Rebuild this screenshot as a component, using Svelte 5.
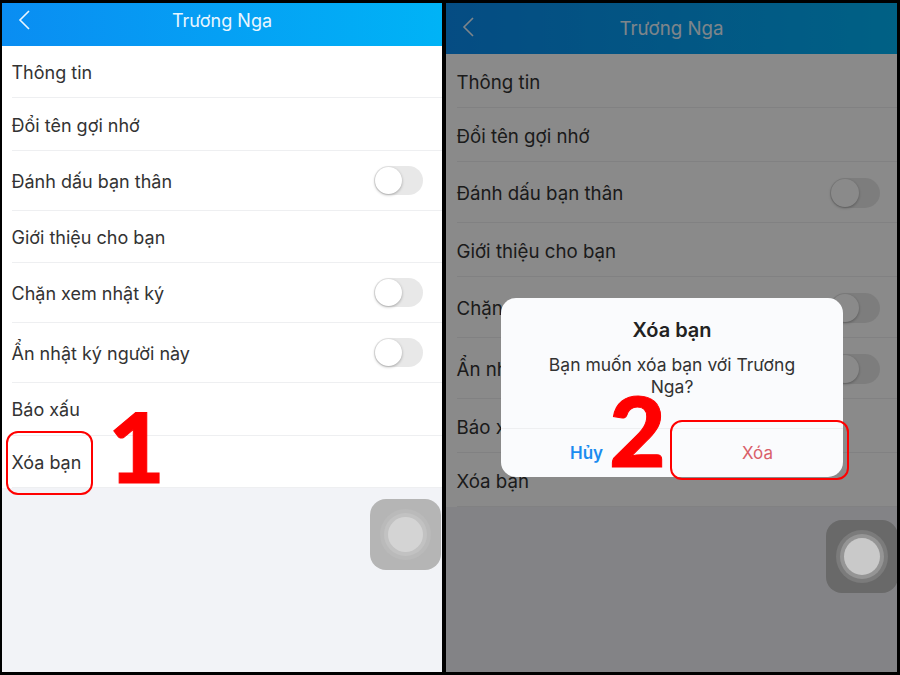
<script>
	const rows = [
		{ label: 'Thông tin' },
		{ label: 'Đổi tên gợi nhớ' },
		{ label: 'Đánh dấu bạn thân', toggle: true },
		{ label: 'Giới thiệu cho bạn' },
		{ label: 'Chặn xem nhật ký', toggle: true },
		{ label: 'Ẩn nhật ký người này', toggle: true },
		{ label: 'Báo xấu' },
		{ label: 'Xóa bạn' }
	];
</script>

{#snippet screen()}
	<header class="bar">
		<svg class="back" viewBox="0 0 14 22" fill="none" stroke="currentColor" stroke-width="1.6">
			<path d="M12 2 3 11l9 9" />
		</svg>
		<span>Trương Nga</span>
	</header>
	<ul class="list">
		{#each rows as row}
			<li class:tall={row.toggle}>
				<span>{row.label}</span>
				{#if row.toggle}
					<i class="toggle"></i>
				{/if}
			</li>
		{/each}
	</ul>
{/snippet}

{#snippet touch()}
	<div class="touch">
		<i class="ring outer"></i>
		<i class="ring mid"></i>
		<i class="ring core"></i>
	</div>
{/snippet}

<main class="page">
	<section class="phone first">
		{@render screen()}
		{@render touch()}
		<b class="mark mark-row"></b>
		<b class="digit one">1</b>
	</section>

	<section class="phone second">
		{@render screen()}
		<div class="dim"></div>
		{@render touch()}
		<div class="dialog">
			<h2>Xóa bạn</h2>
			<p>Bạn muốn xóa bạn với Trương Nga?</p>
			<div class="actions">
				<span class="cancel">Hủy</span>
				<span class="delete">Xóa</span>
			</div>
		</div>
		<b class="mark mark-btn"></b>
		<b class="digit two">2</b>
	</section>
</main>

<style>
	:global(body) {
		background: #000;
	}

	.page {
		width: 900px;
		height: 675px;
		box-sizing: border-box;
		padding: 3px 2px 3px 2px;
		display: flex;
		gap: 4px;
		background: #000;
		font-family: Inter, 'Liberation Sans', sans-serif;
		overflow: hidden;
	}

	.phone {
		position: relative;
		background: #f2f3f7;
		overflow: hidden;
		display: flex;
		flex-direction: column;
	}

	.first {
		width: 440px;
		--bar: 43px;
		--row: 52.4px;
		--tall: 60px;
		--fs: 18px;
		--pad: 9.5px;
		--row-top: 2px;
		--toggle-w: 49px;
		--toggle-h: 29px;
		--toggle-gap: 19px;
		--title-lift: 8px;
		--back-top: -16px;
	}

	.second {
		width: 451px;
		--bar: 51px;
		--row: 54px;
		--tall: 61px;
		--fs: 18.7px;
		--pad: 10.5px;
		--row-top: 3px;
		--toggle-w: 50px;
		--toggle-h: 30px;
		--toggle-gap: 17px;
		--title-lift: 0px;
		--back-top: -13px;
	}

	.bar {
		height: var(--bar);
		flex: none;
		display: flex;
		align-items: center;
		justify-content: center;
		position: relative;
		background: linear-gradient(90deg, #0a8df2, #00b3f6);
		color: #e9f6ff;
		font-size: var(--fs);
		padding-bottom: var(--title-lift);
		box-sizing: border-box;
	}

	.back {
		position: absolute;
		left: 15px;
		top: 50%;
		width: 14px;
		height: 22px;
		margin-top: var(--back-top);
	}

	.list {
		list-style: none;
		margin: 0;
		padding: 0;
		background: #fff;
	}

	.list li {
		height: var(--row);
		box-sizing: border-box;
		margin-left: var(--pad);
		padding-right: var(--toggle-gap);
		padding-top: var(--row-top);
		display: flex;
		align-items: center;
		justify-content: space-between;
		border-bottom: 1px solid #eeeff1;
		color: #333;
		font-size: var(--fs);
	}

	.list li.tall {
		height: var(--tall);
	}

	.toggle {
		width: var(--toggle-w);
		height: var(--toggle-h);
		margin-top: -2px;
		border-radius: 15px;
		background: #e8e8e8;
		position: relative;
	}

	.toggle::after {
		content: '';
		position: absolute;
		left: 1px;
		top: 1px;
		bottom: 1px;
		aspect-ratio: 1;
		border-radius: 50%;
		background: #fff;
		box-shadow: 0 1px 3px rgba(0, 0, 0, 0.3);
	}

	.touch {
		position: absolute;
		left: 368px;
		top: 496px;
		width: 71px;
		height: 71px;
		border-radius: 16px;
		background: #b5b5b5;
	}

	.second .touch {
		left: 380px;
		top: 517px;
		width: 72px;
		height: 73px;
		background: #696969;
	}

	.ring {
		position: absolute;
		border-radius: 50%;
	}

	.outer {
		inset: 10px;
		background: #bababa;
	}

	.mid {
		inset: 14px;
		background: #c2c2c2;
	}

	.core {
		inset: 18px;
		background: #d4d4d4;
	}

	.second .outer {
		background: #7b7b7b;
	}

	.second .mid {
		background: #959595;
	}

	.second .core {
		background: #c9c9c9;
	}

	.dim {
		position: absolute;
		inset: 0;
		background: rgba(0, 0, 0, 0.46);
	}

	.dialog {
		position: absolute;
		left: 55px;
		top: 295px;
		width: 342px;
		height: 179px;
		border-radius: 15px;
		background: #fafbfd;
		display: flex;
		flex-direction: column;
		align-items: center;
		color: #333;
	}

	.dialog h2 {
		margin: 20px 0 0;
		font-size: 20px;
		font-weight: 600;
		line-height: 24px;
		color: #222;
	}

	.dialog p {
		margin: 12px 0 0;
		width: 260px;
		text-align: center;
		font-size: 17.5px;
		line-height: 22px;
	}

	.actions {
		margin-top: auto;
		height: 48px;
		align-self: stretch;
		border-top: 1px solid #eeeff1;
		display: grid;
		grid-template-columns: 1fr 1fr;
		align-items: center;
		text-align: center;
		font-size: 17px;
	}

	.cancel {
		color: #1a8cf0;
		font-weight: 600;
	}

	.delete {
		color: #d9606a;
	}

	.mark {
		position: absolute;
		border: 2px solid #f00;
		border-radius: 12px;
	}

	.mark-row {
		left: 4px;
		top: 428px;
		width: 83px;
		height: 60px;
	}

	.mark-btn {
		left: 224px;
		top: 417px;
		width: 175px;
		height: 56px;
	}

	.digit {
		position: absolute;
		color: #f00;
		font-family: Lato, 'DejaVu Sans', sans-serif;
		font-weight: 900;
		font-size: 98px;
		line-height: 100px;
		-webkit-text-stroke: 1px #f00;
	}

	.one {
		left: 106px;
		top: 392px;
	}

	.two {
		left: 163px;
		top: 376px;
	}
</style>
